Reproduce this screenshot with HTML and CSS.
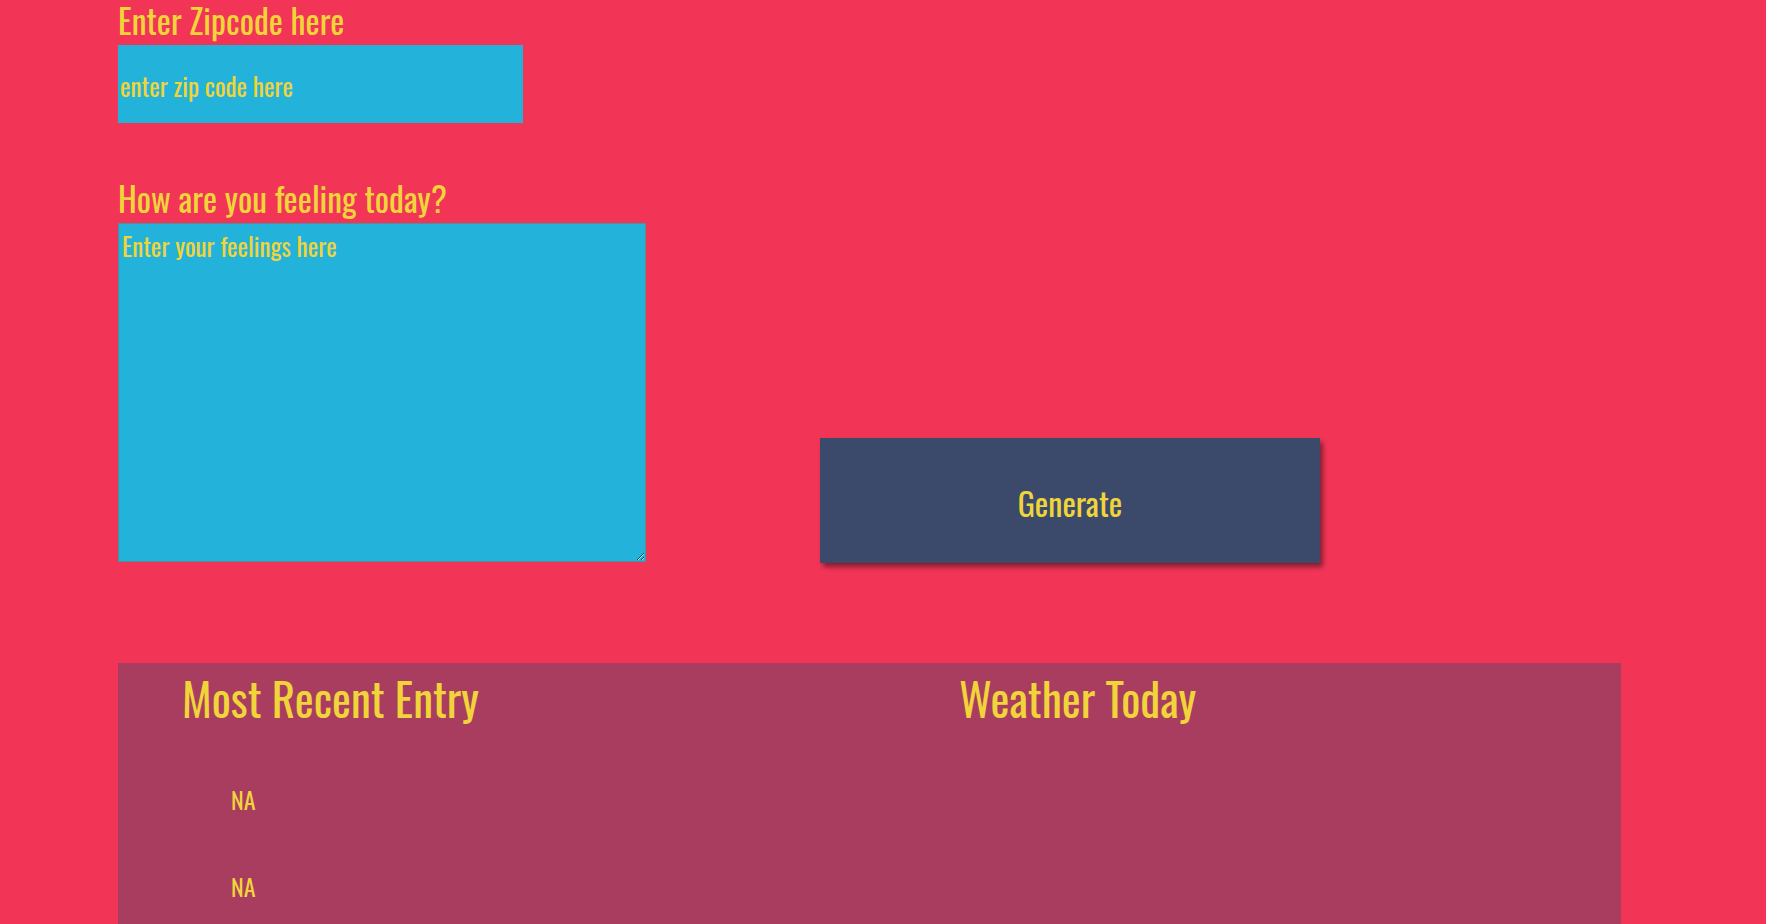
FILE: index.html
```html
<!DOCTYPE html>
<html lang="en">
<head>
<meta charset="utf-8">
<title>Weather Journal</title>
<link rel="stylesheet" href="styles.css">
</head>
<body>
<main class="app">
  <section class="entry">
    <div class="fields">
      <label class="label" for="zip">Enter Zipcode here</label>
      <input class="zip" id="zip" type="text" placeholder="enter zip code here">
      <label class="label label-feel" for="feelings">How are you feeling today?</label>
      <textarea class="feelings" id="feelings" placeholder="Enter your feelings here"></textarea>
    </div>
    <button class="generate" type="button">Generate</button>
  </section>
  <section class="holder">
    <div class="col col-recent">
      <h2 class="title">Most Recent Entry</h2>
      <div class="item">NA</div>
      <div class="item">NA</div>
    </div>
    <div class="col col-weather">
      <h2 class="title">Weather Today</h2>
    </div>
  </section>
</main>
</body>
</html>
```
FILE: styles.css
```css
html, body {
  margin: 0;
  height: 100%;
  overflow: hidden;
}
body {
  background: #f23557;
  font-family: "Oswald", "Roboto Condensed", "Liberation Sans", sans-serif;
  color: #f0d43a;
}
.app {
  padding-left: 118px;
  padding-top: 1px;
}
.entry {
  display: flex;
  align-items: flex-end;
  margin-top: -1px;
}
.fields {
  display: flex;
  flex-direction: column;
  align-items: flex-start;
}
.label {
  display: block;
  font-size: 33.6px;
  line-height: 40px;
}
.label-feel {
  margin-top: 55px;
}
.zip {
  box-sizing: border-box;
  width: 405px;
  height: 78px;
  margin-top: 5px;
  border: none;
  background: #22b2da;
  padding: 3px 2px 0;
  font-family: inherit;
  font-size: 25px;
  color: #f0d43a;
  outline: none;
}
.zip::placeholder, .feelings::placeholder {
  color: #f0d43a;
  opacity: 1;
}
.feelings {
  display: block;
  box-sizing: border-box;
  width: 528px;
  height: 339px;
  margin-top: 5px;
  border: 1px solid #4f8f9c;
  background: #22b2da;
  padding: 3px 3px;
  font-family: inherit;
  font-size: 25px;
  line-height: 37px;
  color: #f0d43a;
}
.generate {
  box-sizing: border-box;
  width: 500px;
  height: 125px;
  margin-left: 174px;
  margin-bottom: -1px;
  padding: 3px 0 0;
  border: none;
  background: #3b4a6b;
  color: #f0d43a;
  font-family: inherit;
  font-size: 32px;
  box-shadow: 3px 4px 5px rgba(0, 0, 0, 0.45);
  cursor: pointer;
}
.holder {
  margin-top: 101px;
  width: 1503px;
  height: 300px;
  background: rgba(59, 74, 107, 0.4);
  display: grid;
  grid-template-columns: 777px 1fr;
}
.col {
  padding-left: 64px;
}
.title {
  margin: 0;
  font-weight: 400;
  font-size: 45px;
  line-height: 70px;
}
.item {
  font-size: 24px;
  line-height: 36px;
  padding-left: 49px;
}
.item:first-of-type {
  margin-top: 48px;
}
.item + .item {
  margin-top: 51px;
}
```
